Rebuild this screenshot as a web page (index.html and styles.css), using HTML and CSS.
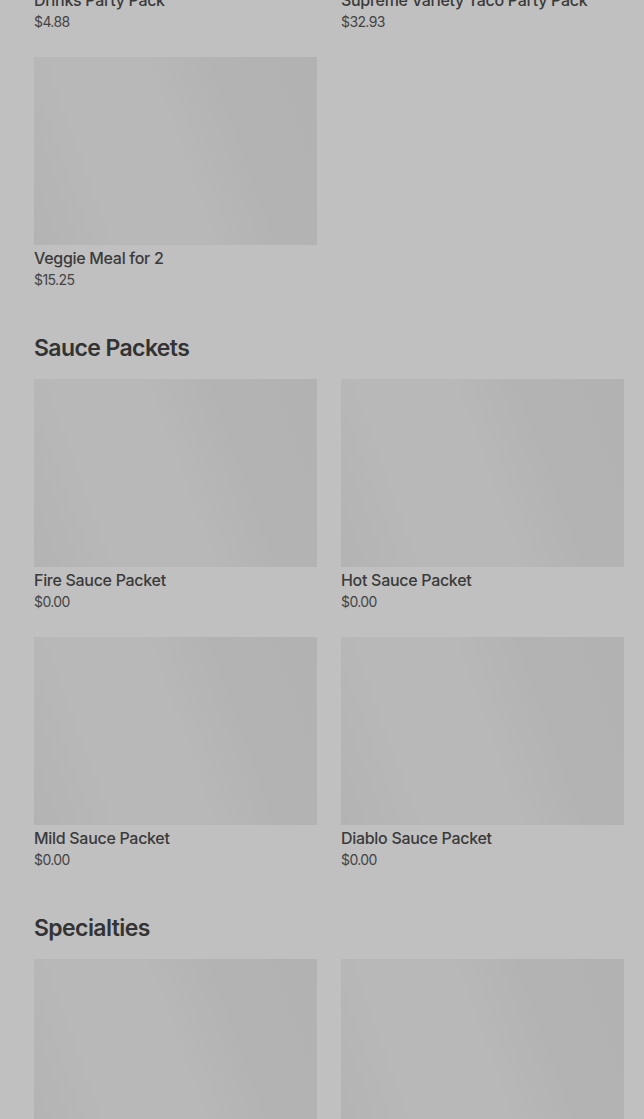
FILE: index.html
```html
<!DOCTYPE html>
<html lang="en">
<head>
    <meta charset="UTF-8">
    <meta name="viewport" content="width=device-width, initial-scale=1.0">
    <title>Menu</title>
    <link rel="stylesheet" href="styles.css">
</head>
<body>
<div class="menu">
    <div class="grid top">
        <div class="item">
            <p class="item-name">Drinks Party Pack</p>
            <p class="item-price">$4.88</p>
        </div>
        <div class="item">
            <p class="item-name">Supreme Variety Taco Party Pack</p>
            <p class="item-price">$32.93</p>
        </div>
        <div class="item">
            <div class="thumb"></div>
            <p class="item-name">Veggie Meal for 2</p>
            <p class="item-price">$15.25</p>
        </div>
    </div>

    <section class="section">
        <h2>Sauce Packets</h2>
        <div class="grid">
            <div class="item">
                <div class="thumb"></div>
                <p class="item-name">Fire Sauce Packet</p>
                <p class="item-price">$0.00</p>
            </div>
            <div class="item">
                <div class="thumb"></div>
                <p class="item-name">Hot Sauce Packet</p>
                <p class="item-price">$0.00</p>
            </div>
            <div class="item">
                <div class="thumb"></div>
                <p class="item-name">Mild Sauce Packet</p>
                <p class="item-price">$0.00</p>
            </div>
            <div class="item">
                <div class="thumb"></div>
                <p class="item-name">Diablo Sauce Packet</p>
                <p class="item-price">$0.00</p>
            </div>
        </div>
    </section>

    <section class="section">
        <h2>Specialties</h2>
        <div class="grid">
            <div class="item">
                <div class="thumb"></div>
            </div>
            <div class="item">
                <div class="thumb"></div>
            </div>
        </div>
    </section>
</div>
</body>
</html>
```

FILE: styles.css
```css
body {
    margin: 0;
    background-color: #c0c0c0;
    font-family: Inter, 'Noto Sans', sans-serif;
    overflow: hidden;
}
.menu {
    padding: 0 20px 0 34px;
    margin-top: -11px;
}
.grid {
    display: grid;
    grid-template-columns: 283px 283px;
    column-gap: 24px;
    row-gap: 24px;
}
.item p {
    margin: 0;
}
.thumb {
    height: 188px;
    margin-bottom: 2px;
    background: linear-gradient(70deg, #b3b3b3 0%, #b8b8b8 25%, #b8b8b8 50%, #b3b3b3 70%, #b2b2b2 100%);
}
.item-name {
    font-size: 16px;
    font-weight: 500;
    line-height: 22px;
    color: #3a3a3a;
    letter-spacing: -0.3px;
}
.item-price {
    font-size: 14px;
    line-height: 22px;
    color: #444;
    letter-spacing: -0.6px;
}
.section h2 {
    margin: 42px 0 16px;
    font-size: 23px;
    line-height: 30px;
    font-weight: 600;
    color: #333;
    letter-spacing: -0.6px;
}
```
